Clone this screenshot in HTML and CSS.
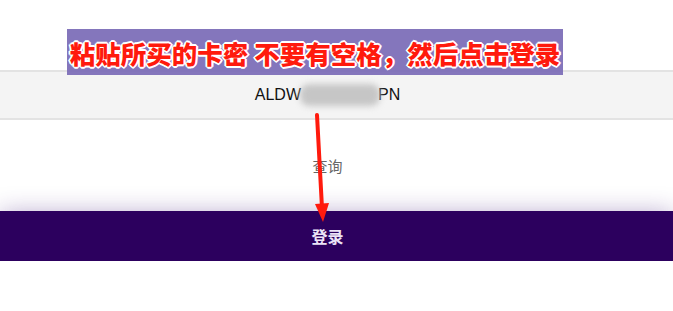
FILE: index.html
```html
<!DOCTYPE html>
<html>
  <head>
    <meta charset="UTF-8" />
    <title>卡密登录</title>
    <link rel="stylesheet" href="styles.css">
  </head>
  <body>
    <div class="page">
      <!-- card key input -->
      <div class="keybox">
        <span class="key">ALDW<span class="blur"></span>PN</span>
      </div>
      <div class="query">查询</div>
      <button class="login">登录</button>
    </div>

    <!-- screenshot annotation drawn over the page -->
    <div class="note">粘贴所买的卡密 不要有空格，然后点击登录</div>
    <svg class="arrow" width="673" height="311" viewBox="0 0 673 311">
      <line x1="317" y1="115" x2="322" y2="208" stroke="#ff1a0d" stroke-width="4" stroke-linecap="round" />
      <polygon points="315,204 329,203 323,222" fill="#ff1a0d" />
    </svg>
  </body>
</html>
```

FILE: styles.css
```css
body {
  margin: 0;
  background: #fff;
  font-family: "Liberation Sans", Arial, "Noto Sans CJK SC", sans-serif;
  overflow: hidden;
}
.page {
  padding-top: 70px;
}
/* grey input strip across the page */
.keybox {
  height: 46px;
  background: #f4f4f4;
  border-top: 2px solid #e3e3e3;
  border-bottom: 2px solid #e3e3e3;
  display: flex;
  justify-content: center;
  align-items: center;
  padding-right: 18px;
}
.key {
  font-size: 16px;
  color: #111;
  display: flex;
  align-items: center;
}
/* the hidden part of the key is smudged out */
.blur {
  display: inline-block;
  width: 80px;
  height: 22px;
  margin: 0 -2px 0 -1px;
  background: #c6c6c6;
  border-radius: 9px;
  filter: blur(3px);
}
.query {
  margin-top: 35px;
  padding-right: 18px;
  text-align: center;
  font-size: 15px;
  color: #666;
  height: 22px;
}
.login {
  display: block;
  width: 100%;
  height: 50px;
  margin-top: 34px;
  padding-right: 24px;
  border: none;
  background: #2c005e;
  color: #ece4f6;
  font-size: 16px;
  font-weight: bold;
  font-family: "Noto Sans CJK SC", sans-serif;
  box-shadow: 0 3px 26px rgba(60, 20, 120, 0.4);
}
.note {
  position: absolute;
  left: 67px;
  top: 29px;
  width: 496px;
  height: 46px;
  background: rgba(122, 106, 182, 0.92);
  display: flex;
  align-items: center;
  justify-content: center;
  font-family: "Noto Sans CJK SC", sans-serif;
  font-weight: 900;
  font-size: 25.5px;
  color: #ff1a0d;
  text-shadow: 1px 1px 0 #fff, -1px -1px 0 #fff, 1px -1px 0 #fff, -1px 1px 0 #fff,
    0 2px 0 #fff, 0 -2px 0 #fff, 2px 0 0 #fff, -2px 0 0 #fff;
}
.arrow {
  position: absolute;
  left: 0;
  top: 0;
}
```
